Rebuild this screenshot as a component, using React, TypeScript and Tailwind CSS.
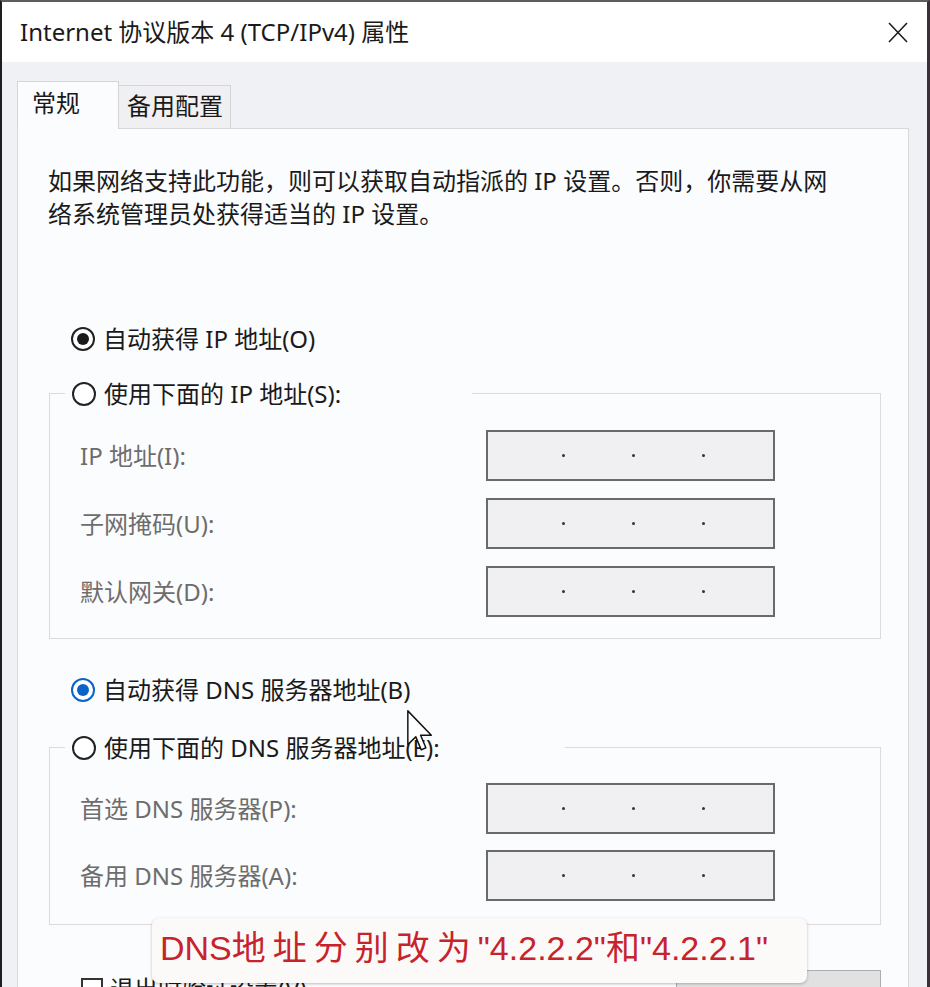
import React from "react";

const FONT = { fontFamily: '"Noto Sans", "Noto Sans CJK SC", sans-serif' };

function Radio({ checked, blue, label }: { checked?: boolean; blue?: boolean; label: string }) {
  const ring = blue ? "border-[#0a64c8]" : "border-[#222]";
  const dot = blue ? "bg-[#0a64c8]" : "bg-[#1a1a1a]";
  return (
    <div className="flex items-center h-[33px] gap-[8px] whitespace-nowrap">
      <div className={`w-[24px] h-[24px] rounded-full border-2 ${checked ? ring : "border-[#222]"} bg-white flex items-center justify-center`}>
        {checked && <div className={`w-[12px] h-[12px] rounded-full ${dot}`} />}
      </div>
      <span className="text-[24px] leading-[33px] text-[#1a1a1a]">{label}</span>
    </div>
  );
}

function IpBox() {
  return (
    <div className="w-[289px] h-[51px] bg-[#f0f0f2] border-2 border-[#6a6a6a] flex items-center pl-[74px] gap-[67px]">
      <span className="w-[3px] h-[3px] rounded-full bg-[#333]" />
      <span className="w-[3px] h-[3px] rounded-full bg-[#333]" />
      <span className="w-[3px] h-[3px] rounded-full bg-[#333]" />
    </div>
  );
}

function FieldRow({ label }: { label: string }) {
  return (
    <div className="flex items-center h-[51px]">
      <span className="w-[406px] text-[24px] leading-[33px] text-[#6d6d6d] whitespace-nowrap">{label}</span>
      <IpBox />
    </div>
  );
}

export default function App() {
  return (
    <div
      className="relative w-[930px] h-[987px] overflow-hidden flex flex-col bg-white border-t-2 border-l-2 border-r-[3px] border-t-[#5e5e5e] border-l-[#1e1e1e] border-r-[#3b3038]"
      style={FONT}
    >
      {/* Title bar */}
      <div className="h-[60px] flex items-center justify-between pl-[18px] pr-[19px] bg-white shrink-0">
        <span className="text-[24px] text-[#1a1a1a] whitespace-nowrap">Internet 协议版本 4 (TCP/IPv4) 属性</span>
        <svg width="20" height="21" viewBox="0 0 20 21">
          <path d="M1 1 L19 20 M19 1 L1 20" stroke="#1e1e1e" strokeWidth="1.6" fill="none" />
        </svg>
      </div>

      {/* Body */}
      <div className="flex-1 bg-[#f0f1f5] pt-[19px] pl-[15px] pr-[18px] flex flex-col">
        {/* Tabs */}
        <div className="flex items-end">
          <div className="relative z-10 -mb-px w-[102px] h-[48px] bg-[#fbfcfd] border-l border-t border-r border-[#d5d5d5] pl-[14px] pt-[4px]">
            <span className="text-[24px] leading-[33px] text-[#1a1a1a]">常规</span>
          </div>
          <div className="w-[112px] h-[43px] bg-[#f0f0f2] border-t border-r border-[#d5d5d5] pl-[8px] pt-[3px]">
            <span className="text-[24px] leading-[33px] text-[#1a1a1a] whitespace-nowrap">备用配置</span>
          </div>
        </div>

        {/* Panel */}
        <div className="flex-1 bg-[#fbfcfd] border border-[#d9d9d9] pl-[30px] pt-[35px]">
          <p className="text-[24px] leading-[33px] text-[#1a1a1a] whitespace-nowrap">
            如果网络支持此功能，则可以获取自动指派的 IP 设置。否则，你需要从网
            <br />
            络系统管理员处获得适当的 IP 设置。
          </p>

          <div className="mt-[92px] ml-[23px]">
            <Radio checked label="自动获得 IP 地址(O)" />
          </div>

          <fieldset className="mt-[22px] ml-[1px] w-[832px] border border-[#dcdcdc]">
            <legend className="ml-[15px] w-[407px] pl-[7px]">
              <Radio label="使用下面的 IP 地址(S):" />
            </legend>
            <div className="pl-[30px] pt-[20px] pb-[21px] flex flex-col gap-[17px]">
              <FieldRow label="IP 地址(I):" />
              <FieldRow label="子网掩码(U):" />
              <FieldRow label="默认网关(D):" />
            </div>
          </fieldset>

          <div className="mt-[34px] ml-[23px]">
            <Radio checked blue label="自动获得 DNS 服务器地址(B)" />
          </div>

          <fieldset className="mt-[25px] ml-[1px] w-[832px] border border-[#dcdcdc]">
            <legend className="ml-[15px] w-[500px] pl-[7px]">
              <Radio label="使用下面的 DNS 服务器地址(E):" />
            </legend>
            <div className="pl-[30px] pt-[19px] pb-[23px] flex flex-col gap-[16px]">
              <FieldRow label="首选 DNS 服务器(P):" />
              <FieldRow label="备用 DNS 服务器(A):" />
            </div>
          </fieldset>

          <div className="mt-[47px] ml-[1px] w-[832px] flex justify-between items-start">
            <div className="flex items-center gap-[7px] pl-[32px] h-[33px]">
              <div className="w-[22px] h-[22px] border-2 border-[#333] bg-white" />
              <span className="text-[24px] leading-[33px] text-[#1a1a1a] whitespace-nowrap">退出时验证设置(V)</span>
            </div>
            <div className="-mt-[2px] w-[205px] h-[46px] bg-[#e1e1e1] border border-[#adadad]" />
          </div>
        </div>
      </div>

      {/* Mouse cursor */}
      <svg className="absolute left-[405px] top-[708px]" width="26" height="42" viewBox="0 0 12.4 20">
        <path d="M0.4 0.4 L0.4 16.4 L4.2 12.8 L6.8 19 L9 18 L6.5 12 L11.6 12 Z" fill="white" stroke="#111" strokeWidth="0.7" strokeLinejoin="round" />
      </svg>

      {/* Caption overlay */}
      <div className="absolute left-[150px] top-[916px] w-[655px] h-[65px] rounded-[7px] bg-[#fcf9f9] shadow-[0_1px_3px_rgba(0,0,0,0.25)] flex items-center pl-[8px] pb-[6px]">
        <span
          className="text-[34px] leading-[40px] text-[#c7232d] whitespace-nowrap"
          style={{ fontFamily: '"Liberation Sans", "Noto Sans CJK SC", sans-serif' }}
        >
          DNS<span className="tracking-[7px]">地址分别改为</span>"4.2.2.2"和"4.2.2.1"
        </span>
      </div>
    </div>
  );
}
